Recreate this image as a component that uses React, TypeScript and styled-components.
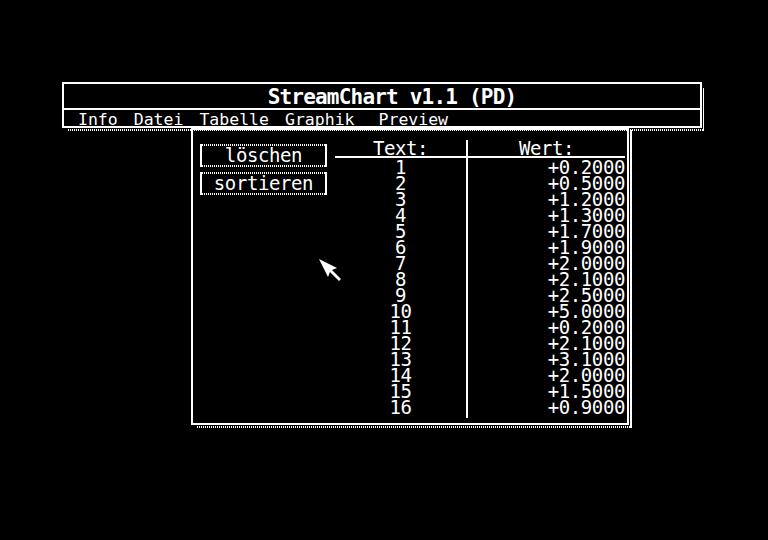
import React from "react";
import styled, { createGlobalStyle } from "styled-components";

const rows: { text: string; value: string }[] = [
  { text: "1", value: "+0.2000" },
  { text: "2", value: "+0.5000" },
  { text: "3", value: "+1.2000" },
  { text: "4", value: "+1.3000" },
  { text: "5", value: "+1.7000" },
  { text: "6", value: "+1.9000" },
  { text: "7", value: "+2.0000" },
  { text: "8", value: "+2.1000" },
  { text: "9", value: "+2.5000" },
  { text: "10", value: "+5.0000" },
  { text: "11", value: "+0.2000" },
  { text: "12", value: "+2.1000" },
  { text: "13", value: "+3.1000" },
  { text: "14", value: "+2.0000" },
  { text: "15", value: "+1.5000" },
  { text: "16", value: "+0.9000" },
];

// menu titles, with the extra room the last one gets
const menu: { label: string; gap: number }[] = [
  { label: "Info", gap: 0 },
  { label: "Datei", gap: 16 },
  { label: "Tabelle", gap: 16 },
  { label: "Graphik", gap: 16 },
  { label: "Preview", gap: 24 },
];

const App: React.FC = () => {
  return (
    <>
      <Global />
      <Screen>
        <TopWindow>
          <TitleBar>StreamChart v1.1 (PD)</TitleBar>
          <MenuBar>
            {menu.map((m) => (
              <MenuItem key={m.label} gap={m.gap}>
                {m.label}
              </MenuItem>
            ))}
          </MenuBar>
        </TopWindow>

        <MainWindow>
          <Buttons>
            <Button>löschen</Button>
            <Button>sortieren</Button>
          </Buttons>
          <Table>
            <Column width={131}>
              <HeadCell>Text:</HeadCell>
              <Body align="center">
                {rows.map((r) => (
                  <Cell key={r.text}>{r.text}</Cell>
                ))}
              </Body>
            </Column>
            <Column width={157} divider>
              <HeadCell>Wert:</HeadCell>
              <Body align="right">
                {rows.map((r) => (
                  <Cell key={r.text}>{r.value}</Cell>
                ))}
              </Body>
            </Column>
          </Table>
        </MainWindow>

        {/* mouse pointer */}
        <Pointer width="24" height="24" viewBox="0 0 24 24">
          <polygon
            points="0,0 18,9 13,11 22,20 20,22 11,13 9,18"
            fill="#fff"
          />
        </Pointer>
      </Screen>
    </>
  );
};

export default App;

const Global = createGlobalStyle`
  html, body {
    margin: 0;
    padding: 0;
    background: #000;
  }
  * {
    box-sizing: border-box;
  }
`;

const dither = `repeating-linear-gradient(90deg, #fff 0 1px, transparent 1px 2px)`;

const Screen = styled.div`
  position: relative;
  width: 768px;
  height: 540px;
  background: #000;
  overflow: hidden;
  color: #fff;
  font-family: "DejaVu Sans Mono", "Liberation Mono", monospace;
`;

const TopWindow = styled.div`
  position: absolute;
  left: 62px;
  top: 82px;
  width: 640px;
  border: 2px solid #fff;
  background: #000;
  z-index: 2;

  &::before {
    content: "";
    position: absolute;
    top: 4px;
    right: -4px;
    bottom: -5px;
    width: 1px;
    background: #fff;
  }
  &::after {
    content: "";
    position: absolute;
    left: 4px;
    right: -4px;
    bottom: -5px;
    height: 2px;
    background-image: ${dither};
  }
`;

const TitleBar = styled.div`
  height: 26px;
  display: flex;
  align-items: center;
  justify-content: center;
  padding-left: 20px;
  padding-top: 1px;
  border-bottom: 2px solid #fff;
  font-weight: bold;
  font-size: 21px;
  letter-spacing: -0.8px;
`;

const MenuBar = styled.div`
  height: 16px;
  display: flex;
  align-items: flex-start;
  padding-left: 14px;
  font-size: 16.5px;
  line-height: 16px;
`;

const MenuItem = styled.span<{ gap: number }>`
  margin-left: ${(p) => p.gap}px;
  margin-top: 2px;
  white-space: nowrap;
`;

const MainWindow = styled.div`
  position: absolute;
  left: 191px;
  top: 128px;
  width: 438px;
  height: 297px;
  border: 2px solid #fff;
  background: #000;
  z-index: 1;
  display: flex;
  align-items: flex-start;
  gap: 8px;
  padding: 10px 2px 5px 7px;
  font-size: 19px;
  letter-spacing: -0.4px;

  &::before {
    content: "";
    position: absolute;
    top: 0;
    right: -5px;
    bottom: -5px;
    width: 2px;
    background: #fff;
  }
  &::after {
    content: "";
    position: absolute;
    left: 4px;
    right: -5px;
    bottom: -5px;
    height: 2px;
    background-image: ${dither};
  }
`;

const Buttons = styled.div`
  margin-top: 4px;
  display: flex;
  flex-direction: column;
  gap: 5px;
`;

const Button = styled.div`
  width: 127px;
  height: 23px;
  display: flex;
  align-items: center;
  justify-content: center;
  line-height: 1;
  border-left: 2px solid #fff;
  border-right: 2px solid #fff;
  background-image: ${dither}, ${dither};
  background-size: 100% 2px, 100% 2px;
  background-position: top, bottom;
  background-repeat: no-repeat;
  padding-bottom: 1px;
`;

const Table = styled.div`
  display: flex;
  height: 278px;
`;

const Column = styled.div<{ width: number; divider?: boolean }>`
  width: ${(p) => p.width + (p.divider ? 2 : 0)}px;
  display: flex;
  flex-direction: column;
  border-left: ${(p) => (p.divider ? "2px solid #fff" : "none")};
`;

const HeadCell = styled.div`
  height: 18px;
  line-height: 16px;
  text-align: center;
  border-bottom: 2px solid #fff;
`;

const Body = styled.div<{ align: string }>`
  display: flex;
  flex-direction: column;
  text-align: ${(p) => p.align};
`;

const Cell = styled.div`
  height: 16px;
  line-height: 16px;
  padding-top: 1px;
  white-space: nowrap;
`;

const Pointer = styled.svg`
  position: absolute;
  left: 319px;
  top: 259px;
  z-index: 3;
`;
